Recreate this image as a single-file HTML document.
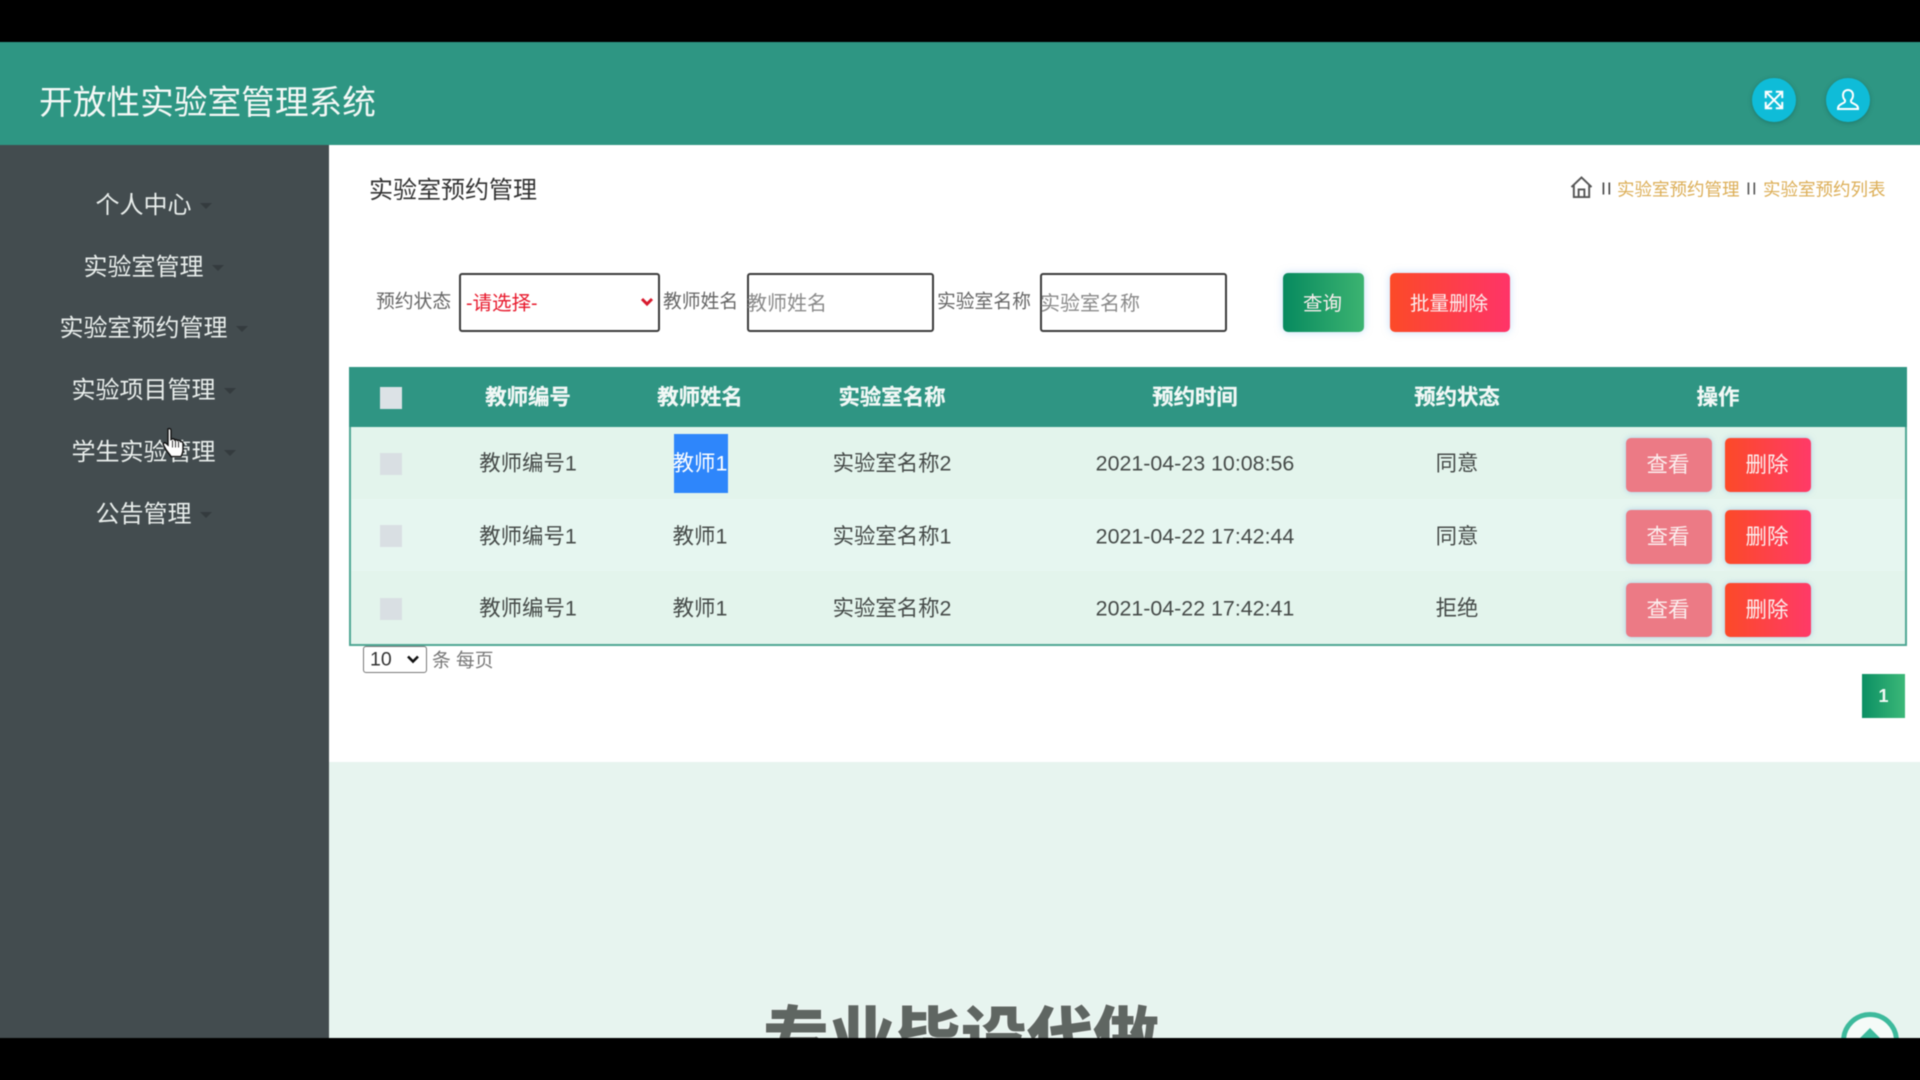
<!DOCTYPE html>
<html lang="zh-CN"><head><meta charset="utf-8"><title>开放性实验室管理系统</title>
<style>
*{box-sizing:border-box}
html,body{margin:0;padding:0;width:1920px;height:1080px;overflow:hidden;background:#000;font-family:"Liberation Sans","Noto Sans CJK SC",sans-serif}
#s{position:relative;width:1920px;height:1080px;overflow:hidden;background:#000}
#w{position:absolute;left:0;top:0;width:1920px;height:1080px;filter:blur(.45px)}
.a{position:absolute}
.t{position:absolute;white-space:nowrap;line-height:1;transform:translate(-50%,-50%)}
.l{position:absolute;white-space:nowrap;line-height:1;transform:translateY(-50%)}
.m{font-size:24px;color:#e9eeec}
.ca{position:absolute;left:100%;top:50%;margin-left:8px;margin-top:-3px;width:0;height:0;border-left:6px solid transparent;border-right:6px solid transparent;border-top:6px solid #343b3e}
.b{font-size:18.8px;color:#666}
.box{position:absolute;background:#fff;border:2px solid #3c3c3c;border-radius:3px;top:273px;height:59px}
.ph{font-size:20px;color:#8a8a8a}
.th{font-size:21.4px;font-weight:700;color:#f2f8f6;top:398px;-webkit-text-stroke:.25px #f2f8f6}
.td{font-size:21.4px;color:#454a48}
.cb{position:absolute;left:380px;width:22px;height:22px;background:#d9dfe3}
.btn{position:absolute;height:54px;width:86px;border-radius:5px;color:#fbeeee;font-size:21.5px;display:flex;align-items:center;justify-content:center;padding:0 2px 3px 0;box-shadow:0 0 6px rgba(120,170,220,.55)}
.v{left:1626px;background:#ec7a85}
.d{left:1725px;background:linear-gradient(90deg,#fc4a28,#ff3a68)}
</style></head><body><div id="s"><div id="w">
<div class="a" style="left:-6px;top:42px;width:1932px;height:103px;background:#2e9683"></div>
<div class="l" style="left:39px;top:103.500px;font-size:33.7px;color:#f4f8f6">开放性实验室管理系统</div>
<div class="a" style="left:1752px;top:78px;width:44px;height:44px;border-radius:50%;background:#0fbcd8;box-shadow:0 1px 5px rgba(0,60,60,.35)"></div>
<svg class="a" style="left:1763px;top:89px" width="22" height="22" viewBox="0 0 24 24" fill="none" stroke="#fff" stroke-width="2.2"><path d="M3 3 21 21M21 3 3 21M3 10V3h7M14 3h7v7M3 14v7h7M14 21h7v-7"/></svg>
<div class="a" style="left:1826px;top:78px;width:44px;height:44px;border-radius:50%;background:#0fbcd8;box-shadow:0 1px 5px rgba(0,60,60,.35)"></div>
<svg class="a" style="left:1836px;top:88px" width="24" height="24" viewBox="0 0 24 24" fill="none" stroke="#fff" stroke-width="2"><path d="M12 2c-3 0-5 2.200-5 5.200 0 2.200.9 3.800 2 5v1.300c0 .8-1 1.200-2.500 1.900C4.500 16.500 2 17.500 2 20.500V21h20v-.5c0-3-2.500-4-4.500-5-1.500-.7-2.500-1.100-2.500-1.900v-1.300c1.100-1.200 2-2.800 2-5C17 4.200 15 2 12 2z"/></svg>

<div class="a" style="left:-6px;top:145px;width:335px;height:893px;background:#434c4f"></div>
<div class="t m" style="left:143.5px;top:206px">个人中心<i class="ca"></i></div>
<div class="t m" style="left:143.5px;top:267.500px">实验室管理<i class="ca"></i></div>
<div class="t m" style="left:143.5px;top:329px">实验室预约管理<i class="ca"></i></div>
<div class="t m" style="left:143.5px;top:391px">实验项目管理<i class="ca"></i></div>
<div class="t m" style="left:143.5px;top:452.500px">学生实验管理<i class="ca"></i></div>
<div class="t m" style="left:143.5px;top:515px">公告管理<i class="ca"></i></div>

<div class="a" style="left:329px;top:145px;width:1597px;height:617px;background:#fff"></div>
<div class="a" style="left:329px;top:762px;width:1597px;height:276px;background:#e7f4ef;overflow:hidden">
<div class="a" style="left:434px;top:238px;font-size:66px;line-height:1;font-weight:900;color:#5f6662;white-space:nowrap;text-shadow:0 0 2px #fff;font-family:'Noto Sans CJK SC',sans-serif">专业毕设代做</div>
<svg class="a" style="left:1511px;top:249px" width="60" height="60" viewBox="0 0 60 60"><circle cx="30" cy="30" r="26.500" fill="#f5fbf8" stroke="#3dba9c" stroke-width="5"/><path d="M30 17 46 33H14z" fill="#3dba9c"/></svg>
</div>

<div class="l" style="left:369px;top:191px;font-size:24px;color:#333">实验室预约管理</div>
<svg class="a" style="left:1570px;top:176px" width="23" height="23" viewBox="0 0 24 24" fill="none" stroke="#555" stroke-width="2"><path d="M1.500 11.500 12 1.500l10.500 10M4 9.500V22h16V9.500M9 22v-8h6v8"/></svg>
<div class="l" style="left:1601px;top:189px;font-size:17.5px;color:#444;letter-spacing:1px">II</div>
<div class="l" style="left:1617px;top:189.500px;font-size:17.5px;color:#dcae56">实验室预约管理</div>
<div class="l" style="left:1746px;top:189px;font-size:17.5px;color:#555;letter-spacing:1px">II</div>
<div class="l" style="left:1763px;top:189.500px;font-size:17.5px;color:#dcae56">实验室预约列表</div>

<div class="l b" style="left:376px;top:302px">预约状态</div>
<div class="box" style="left:459px;width:201px"></div>
<div class="l" style="left:466px;top:304px;font-size:19.5px;color:#e8192c">-请选择-</div>
<svg class="a" style="left:640px;top:297px" width="14" height="10" viewBox="0 0 14 10" fill="none" stroke="#d8192c" stroke-width="3"><path d="M2 2l5 5 5-5"/></svg>
<div class="l b" style="left:663px;top:302px">教师姓名</div>
<div class="box" style="left:746.500px;width:187px"></div>
<div class="l ph" style="left:747px;top:304px">教师姓名</div>
<div class="l b" style="left:937px;top:302px">实验室名称</div>
<div class="box" style="left:1039.500px;width:187px"></div>
<div class="l ph" style="left:1040px;top:304px">实验室名称</div>
<div class="btn" style="left:1283px;top:273px;width:81px;height:59px;font-size:19.5px;background:linear-gradient(90deg,#078a5f,#3cb371);box-shadow:0 0 8px rgba(140,190,240,.5)">查询</div>
<div class="btn" style="left:1390px;top:273px;width:120px;height:59px;font-size:19.5px;background:linear-gradient(90deg,#fc4a28,#ff3468);box-shadow:0 0 8px rgba(140,190,240,.5)">批量删除</div>

<div class="a" style="left:349px;top:367px;width:1558px;height:279px;border:2px solid #4fa794;border-top:0;background:#e3f4ec"></div>
<div class="a" style="left:351px;top:499px;width:1554px;height:72px;background:#e6f6f0"></div>
<div class="a" style="left:349px;top:367px;width:1558px;height:60px;background:#2f9583"></div>
<div class="cb" style="top:387px;background:#dce2e6"></div>
<div class="t th" style="left:528px">教师编号</div>
<div class="t th" style="left:700px">教师姓名</div>
<div class="t th" style="left:892px">实验室名称</div>
<div class="t th" style="left:1195px">预约时间</div>
<div class="t th" style="left:1457px">预约状态</div>
<div class="t th" style="left:1718px">操作</div>

<div class="cb" style="top:452.500px"></div>
<div class="t td" style="left:528px;top:464px">教师编号1</div>
<div class="a" style="left:674px;top:434px;width:54px;height:59px;background:#2e86fb"></div>
<div class="t td" style="left:700px;top:464px;color:#fff">教师1</div>
<div class="t td" style="left:892px;top:464px">实验室名称2</div>
<div class="t td" style="left:1195px;top:464px">2021-04-23 10:08:56</div>
<div class="t td" style="left:1457px;top:464px">同意</div>
<div class="btn v" style="top:438px">查看</div><div class="btn d" style="top:438px">删除</div>

<div class="cb" style="top:525px"></div>
<div class="t td" style="left:528px;top:537px">教师编号1</div>
<div class="t td" style="left:700px;top:537px">教师1</div>
<div class="t td" style="left:892px;top:537px">实验室名称1</div>
<div class="t td" style="left:1195px;top:537px">2021-04-22 17:42:44</div>
<div class="t td" style="left:1457px;top:537px">同意</div>
<div class="btn v" style="top:510px">查看</div><div class="btn d" style="top:510px">删除</div>

<div class="cb" style="top:597.500px"></div>
<div class="t td" style="left:528px;top:609px">教师编号1</div>
<div class="t td" style="left:700px;top:609px">教师1</div>
<div class="t td" style="left:892px;top:609px">实验室名称2</div>
<div class="t td" style="left:1195px;top:609px">2021-04-22 17:42:41</div>
<div class="t td" style="left:1457px;top:609px">拒绝</div>
<div class="btn v" style="top:583px">查看</div><div class="btn d" style="top:583px">删除</div>

<div class="a" style="left:363px;top:646px;width:64px;height:27px;border:1.5px solid #777;border-radius:3px;background:#fff"></div>
<div class="l" style="left:370px;top:660px;font-size:19.5px;color:#333">10</div>
<svg class="a" style="left:406px;top:654px" width="14" height="11" viewBox="0 0 14 11" fill="none" stroke="#111" stroke-width="2.600"><path d="M2 2.500l5 5 5-5"/></svg>
<div class="l" style="left:432px;top:660.500px;font-size:18.8px;color:#777">条 每页</div>
<div class="a" style="left:1862px;top:674px;width:43px;height:44px;background:linear-gradient(90deg,#0b8f63,#3cb878);color:#f2faf6;font-size:18px;font-weight:700;display:flex;align-items:center;justify-content:center">1</div>

<svg class="a" style="left:162px;top:426px" width="26" height="35" viewBox="0 0 26 34"><path d="M6 2.500c1.500-1 3-.2 3 1.500V13l1-.5c1.200-.5 2.300 0 2.800 1 .8-.6 2.200-.5 2.800.6 1-.5 2.400-.3 3 1 1.200-.3 2.400.5 2.400 2v6c0 3-1 5-2 7H9c-1-2-3-4-5-7l-2.500-4.500c-.8-1.500.8-3 2.300-2l2.200 2V4c0-.7 0-1.100 0-1.500z" fill="#fff" stroke="#111" stroke-width="1.400"/><path d="M10.500 14v7M13.500 14v7M16.500 15v6" stroke="#333" stroke-width="1"/></svg>
</div></div></body></html>
